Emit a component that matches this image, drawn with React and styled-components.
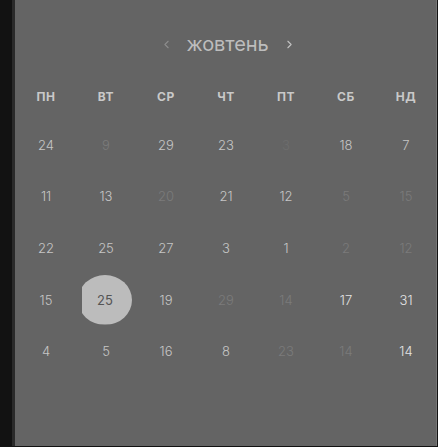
import React from "react"
import styled, { createGlobalStyle } from 'styled-components';
import { ChevronLeft, ChevronRight } from 'lucide-react';

const GlobalStyle = createGlobalStyle`
  html, body {
    margin: 0;
    padding: 0;
    background: #121212;
  }
  body {
    font-family: Inter, "Noto Sans", "DejaVu Sans", sans-serif;
  }
`;

const weekDays = ['ПН', 'ВТ', 'СР', 'ЧТ', 'ПТ', 'СБ', 'НД'];

// n = normal, d = dim, f = faint, b = bright, s = selected
const weeks = [
  [['24', 'n'], ['9', 'd'], ['29', 'n'], ['23', 'n'], ['3', 'f'], ['18', 'n'], ['7', 'n']],
  [['11', 'n'], ['13', 'n'], ['20', 'd'], ['21', 'n'], ['12', 'n'], ['5', 'd'], ['15', 'd']],
  [['22', 'n'], ['25', 'n'], ['27', 'n'], ['3', 'n'], ['1', 'n'], ['2', 'd'], ['12', 'd']],
  [['15', 'n'], ['25', 's'], ['19', 'n'], ['29', 'd'], ['14', 'd'], ['17', 'b'], ['31', 'b']],
  [['4', 'n'], ['5', 'n'], ['16', 'n'], ['8', 'n'], ['23', 'd'], ['14', 'd'], ['14', 'b']],
];

const tones = {
  n: '#c6c6c6',
  d: '#7b7b7b',
  f: '#6d6d6d',
  b: '#e4e4e4',
};

export default function App() {
  return (
    <>
      <GlobalStyle />
      <StyledPage>
        <StyledPanel>
          <StyledMonthBar>
            <StyledArrow $dim>
              <ChevronLeft size={13} strokeWidth={2} />
            </StyledArrow>
            <StyledMonth>жовтень</StyledMonth>
            <StyledArrow>
              <ChevronRight size={13} strokeWidth={2} />
            </StyledArrow>
          </StyledMonthBar>

          <StyledGrid>
            {weekDays.map((d) => (
              <StyledWeekDay key={d}>{d}</StyledWeekDay>
            ))}
          </StyledGrid>

          <StyledDays>
            {weeks.flat().map(([day, tone], i) => (
              <StyledDay key={i} $tone={tone}>
                {tone === 's' ? <StyledSelected>{day}</StyledSelected> : day}
              </StyledDay>
            ))}
          </StyledDays>
        </StyledPanel>
      </StyledPage>
    </>
  );
}

const StyledPage = styled.div`
  display: flex;
  height: 447px;
  padding-left: 12px;
  padding-right: 4px;
  box-sizing: border-box;
  background: #121212;
`;

const StyledPanel = styled.div`
  flex: 1;
  height: 446px;
  background: #646464;
  border-left: 3px solid #2a2a2a;
  border-right: 1px solid #767676;
  box-sizing: border-box;
`;

const StyledMonthBar = styled.div`
  display: flex;
  align-items: center;
  justify-content: center;
  gap: 14px;
  padding-top: 31px;
  height: 26px;
  margin-left: 4px;
`;

const StyledArrow = styled.span`
  display: flex;
  color: ${(p) => (p.$dim ? '#8c8c8c' : '#c2c2c2')};
`;

const StyledMonth = styled.div`
  font-size: 20px;
  font-weight: 400;
  color: #bdbdbd;
  letter-spacing: -0.1px;
  line-height: 26px;
`;

const StyledGrid = styled.div`
  display: grid;
  grid-template-columns: repeat(7, 60px);
  padding-left: 1px;
  margin-top: 28px;
`;

const StyledWeekDay = styled.div`
  text-align: center;
  font-size: 12px;
  font-weight: 700;
  color: #c9c9c9;
  letter-spacing: 0.6px;
  line-height: 24px;
`;

const StyledDays = styled.div`
  display: grid;
  grid-template-columns: repeat(7, 60px);
  grid-auto-rows: 51.6px;
  padding-left: 1px;
  margin-top: 10px;
`;

const StyledDay = styled.div`
  display: flex;
  align-items: center;
  justify-content: center;
  font-size: 13px;
  font-weight: 300;
  color: ${(p) => tones[p.$tone] || '#555'};
`;

const StyledSelected = styled.div`
  display: flex;
  align-items: center;
  justify-content: center;
  flex: none;
  width: 54px;
  height: 50px;
  margin-left: -2px;
  border-radius: 50%;
  background: #bcbcbc;
  color: #555555;
  font-size: 13px;
  font-weight: 400;
  clip-path: inset(0 0 0 4px);
`;
